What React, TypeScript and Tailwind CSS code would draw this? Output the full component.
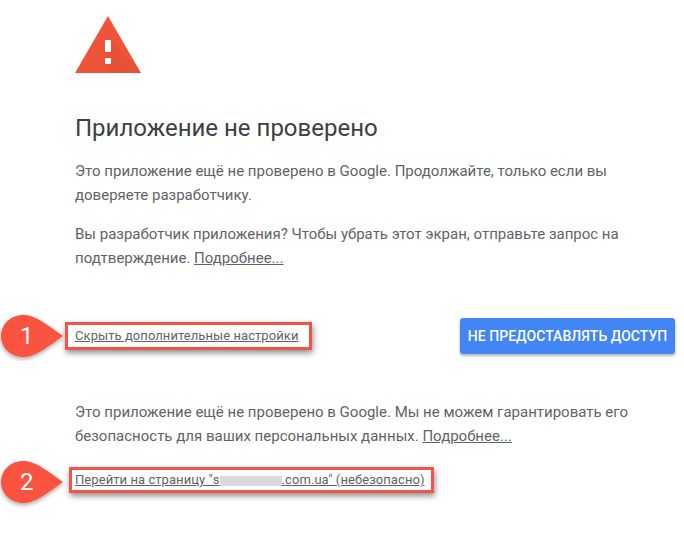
// Unverified-app warning screen with numbered callouts
function Callout({ n }: { n: number }) {
  return (
    <svg className="block" width="66" height="50" viewBox="0 0 66 50">
      <defs>
        <filter id={`shadow-${n}`} x="-20%" y="-20%" width="140%" height="150%">
          <feDropShadow dx="0" dy="2" stdDeviation="2" floodColor="#000" floodOpacity="0.35" />
        </filter>
      </defs>
      <path
        d="M1 25C1 13 11 4 23 4C33 4 41 9 63 25C41 41 33 46 23 46C11 46 1 37 1 25Z"
        fill="#fa5240"
        filter={`url(#shadow-${n})`}
      />
    </svg>
  );
}

function Marked({ n, wrap, box, mark, children }: { n: number; wrap: string; box: string; mark: string; children: React.ReactNode }) {
  return (
    <div className={`relative -ml-[75px] flex items-center ${wrap}`}>
      <div className={`absolute left-0 ${mark}`}>
        <Callout n={n} />
        <span className="absolute left-[20px] top-[8px] text-[24px] leading-[34px] text-white">{n}</span>
      </div>
      <div className={`relative border-[3px] border-[#f2544a] bg-white flex items-center shadow-[1px_3px_6px_rgba(0,0,0,0.45)] ${box}`}>
        {children}
      </div>
    </div>
  );
}

export default function App() {
  return (
    <div className="w-[684px] h-[537px] bg-white overflow-hidden font-['Roboto',sans-serif] text-[#5f6368] pl-[75px] pr-[9px] pt-[16px]">
      <svg width="66" height="57" viewBox="0 0 66 57" className="block">
        <path d="M33 0L66 57H0Z" fill="#f05438" />
        <path d="M36 24L66 57H37L30 48Z" fill="#d94d33" opacity="0.35" />
        <rect x="30" y="24" width="6" height="12" fill="#fff" />
        <rect x="30" y="42" width="6" height="6" fill="#fff" />
      </svg>

      <h1 className="mt-[40px] text-[24px] leading-[30px] text-[#3c4043]">Приложение не проверено</h1>

      <p className="mt-[16px] text-[15px] leading-[24px]">
        Это приложение ещё не проверено в Google. Продолжайте, только если вы
        <br />
        доверяете разработчику.
      </p>
      <p className="mt-[15px] text-[15px] leading-[24px]">
        Вы разработчик приложения? Чтобы убрать этот экран, отправьте запрос на
        <br />
        подтверждение. <span className="underline">Подробнее...</span>
      </p>

      <div className="mt-[48px] flex items-center justify-between">
        <Marked n={1} wrap="pl-[65px]" box="pl-[7px] pr-[11px] h-[28px]" mark="-top-[11px]">
          <span className="text-[13px] underline whitespace-nowrap tracking-[0.07px]">Скрыть дополнительные настройки</span>
        </Marked>
        <button className="h-[36px] w-[215px] rounded-[3px] bg-[#4285f4] text-white text-[14px] font-medium tracking-[0.05px] shadow-[0_2px_3px_rgba(0,0,0,0.3)]">
          НЕ ПРЕДОСТАВЛЯТЬ ДОСТУП
        </button>
      </div>

      <p className="mt-[46px] text-[15px] leading-[24px]">
        Это приложение ещё не проверено в Google. Мы не можем гарантировать его
        <br />
        безопасность для ваших персональных данных. <span className="underline">Подробнее...</span>
      </p>

      <div className="mt-[19px]">
        <Marked n={2} wrap="pl-[69px]" box="pl-[3px] pr-[6px] h-[26px]" mark="-top-[10px]">
          <span className="text-[13px] underline whitespace-nowrap tracking-[0.07px]">
            Перейти на страницу "s<span className="inline-block w-[62px] h-[10px] bg-[#d9d9de] align-middle" />.com.ua" (небезопасно)
          </span>
        </Marked>
      </div>
    </div>
  );
}
